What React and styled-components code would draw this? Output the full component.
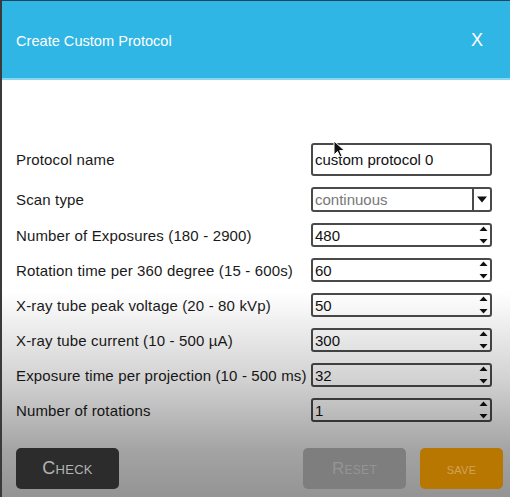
import React from "react";
import styled, { createGlobalStyle } from "styled-components";

const Global = createGlobalStyle`
  html, body { margin: 0; padding: 0; background: #fff; }
  body { font-family: "Liberation Sans", Arial, sans-serif; }
`;

const Frame = styled.div`
  position: relative;
  width: 508px;
  height: 496px;
  border-top: 1px solid #23475a;
  border-left: 2px solid #3a3a3a;
  background: #fff;
  overflow: hidden;
  display: flex;
  flex-direction: column;
`;

const Header = styled.div`
  height: 77px;
  background: #2fb6e5;
  border-bottom: 2px solid #8ad6f1;
  display: flex;
  align-items: center;
  justify-content: space-between;
  padding: 0 27px 0 14px;
  color: #fff;
`;

const Title = styled.div`
  font-size: 14.6px;
  padding-top: 2px;
`;

const Close = styled.div`
  font-size: 18px;
  padding-top: 2px;
`;

const Form = styled.div`
  display: flex;
  flex-direction: column;
  gap: 11px;
  padding: 63px 18px 0 14px;
`;

const Row = styled.div`
  display: flex;
  align-items: center;
  justify-content: space-between;
  height: ${(p) => p.$h}px;
`;

const Label = styled.div`
  font-size: 15px;
  letter-spacing: 0.15px;
  color: #1a1a1a;
  white-space: nowrap;
`;

const Field = styled.div`
  position: relative;
  box-sizing: border-box;
  flex: 0 0 181px;
  height: ${(p) => p.$h}px;
  border: 2px solid #4a4a4a;
  border-radius: 3px;
  background: #fff;
  display: flex;
  align-items: center;
  padding-left: 2px;
  font-size: 15px;
  color: ${(p) => (p.$muted ? "#777" : "#111")};
`;

const FieldText = styled.span`
  flex: 1;
`;

const SelectArrow = styled.div`
  width: 16px;
  align-self: stretch;
  border-left: 2px solid #4a4a4a;
  display: flex;
  align-items: center;
  justify-content: center;
`;

const Spinner = styled.div`
  width: 14px;
  align-self: stretch;
  display: flex;
  align-items: center;
  justify-content: center;
`;

const Footer = styled.div`
  display: flex;
  align-items: center;
  margin-top: 26px;
  padding: 0 7px 0 14px;
  gap: 14px;
  position: relative;
  z-index: 2;
`;

const Spacer = styled.div`
  flex: 1;
`;

const Button = styled.div`
  width: ${(p) => p.$w}px;
  height: 41px;
  border-radius: 5px;
  background: ${(p) => p.$bg};
  color: ${(p) => p.$fg};
  display: flex;
  align-items: center;
  justify-content: center;
  font-variant: small-caps;
  font-size: ${(p) => p.$fs}px;
  letter-spacing: 0.3px;
`;

const Shade = styled.div`
  position: absolute;
  inset: 0;
  pointer-events: none;
  z-index: 1;
  background: linear-gradient(
    to bottom,
    rgba(0, 0, 0, 0) 0px,
    rgba(0, 0, 0, 0) 290px,
    rgba(0, 0, 0, 0.18) 380px,
    rgba(0, 0, 0, 0.36) 450px,
    rgba(0, 0, 0, 0.42) 100%
  );
`;

const Cursor = styled.svg`
  position: absolute;
  left: 331px;
  top: 139px;
  z-index: 3;
`;

const SpinIcon = () => (
  <svg width="9" height="20" viewBox="0 0 9 20">
    <path d="M0.5 6 L4.5 1.5 L8.5 6 Z" fill="#111" />
    <path d="M0.5 14 L4.5 18.5 L8.5 14 Z" fill="#111" />
  </svg>
);

const DownIcon = () => (
  <svg width="10" height="7" viewBox="0 0 10 7">
    <path d="M0 0.5 L10 0.5 L5 6.5 Z" fill="#111" />
  </svg>
);

const numbers = [
  ["Number of Exposures (180 - 2900)", "480"],
  ["Rotation time per 360 degree (15 - 600s)", "60"],
  ["X-ray tube peak voltage (20 - 80 kVp)", "50"],
  ["X-ray tube current (10 - 500 µA)", "300"],
  ["Exposure time per projection (10 - 500 ms)", "32"],
  ["Number of rotations", "1"],
];

export default function App() {
  return (
    <>
      <Global />
      <Frame>
        <Header>
          <Title>Create Custom Protocol</Title>
          <Close>X</Close>
        </Header>
        <Form>
          <Row $h={33}>
            <Label>Protocol name</Label>
            <Field $h={33}>
              <FieldText>custom protocol 0</FieldText>
            </Field>
          </Row>
          <Row $h={25}>
            <Label>Scan type</Label>
            <Field $h={25} $muted>
              <FieldText>continuous</FieldText>
              <SelectArrow>
                <DownIcon />
              </SelectArrow>
            </Field>
          </Row>
          {numbers.map(([label, value]) => (
            <Row $h={24} key={label}>
              <Label>{label}</Label>
              <Field $h={24}>
                <FieldText>{value}</FieldText>
                <Spinner>
                  <SpinIcon />
                </Spinner>
              </Field>
            </Row>
          ))}
        </Form>
        <Footer>
          <Button $w={103} $bg="#2c2c2c" $fg="#b3b3b3" $fs={18}>
            Check
          </Button>
          <Spacer />
          <Button $w={103} $bg="#7e7e7e" $fg="#949494" $fs={17}>
            Reset
          </Button>
          <Button $w={83} $bg="#b87700" $fg="#d1a35c" $fs={15}>
            save
          </Button>
        </Footer>
        <Shade />
        <Cursor width="14" height="20" viewBox="0 0 14 20">
          <path
            d="M1 1 L1 15 L4.5 11.5 L7 17 L9 16 L6.7 10.6 L11.5 10.6 Z"
            fill="#111"
            stroke="#fff"
            strokeWidth="1"
          />
        </Cursor>
      </Frame>
    </>
  );
}
